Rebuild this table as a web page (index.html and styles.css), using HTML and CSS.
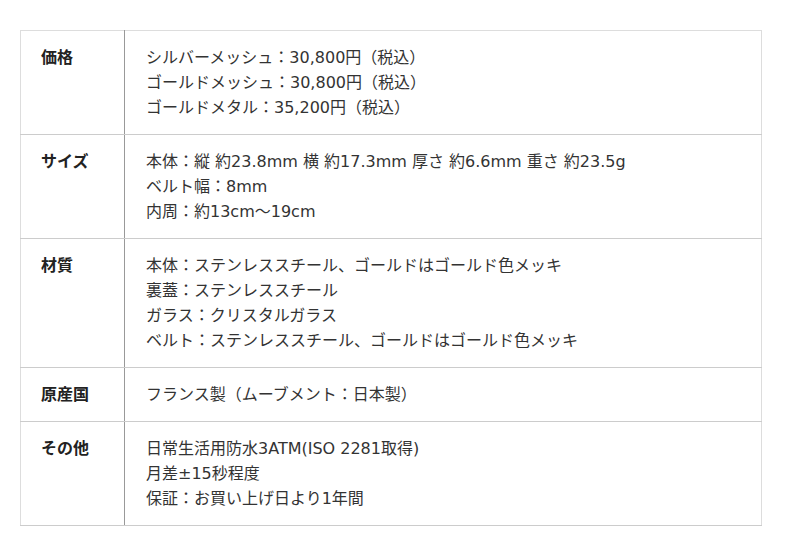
FILE: index.html
```html
<!DOCTYPE html>
<html lang="ja">
<head>
<meta charset="utf-8">
<link rel="stylesheet" href="styles.css">
</head>
<body>
<table class="spec">
  <tr>
    <th>価格</th>
    <td>シルバーメッシュ：30,800円（税込）<br>ゴールドメッシュ：30,800円（税込）<br>ゴールドメタル：35,200円（税込）</td>
  </tr>
  <tr>
    <th>サイズ</th>
    <td>本体：縦 約23.8mm 横 約17.3mm 厚さ 約6.6mm 重さ 約23.5g<br>ベルト幅：8mm<br>内周：約13cm〜19cm</td>
  </tr>
  <tr>
    <th>材質</th>
    <td>本体：ステンレススチール、ゴールドはゴールド色メッキ<br>裏蓋：ステンレススチール<br>ガラス：クリスタルガラス<br>ベルト：ステンレススチール、ゴールドはゴールド色メッキ</td>
  </tr>
  <tr>
    <th>原産国</th>
    <td>フランス製（ムーブメント：日本製）</td>
  </tr>
  <tr>
    <th>その他</th>
    <td>日常生活用防水3ATM(ISO 2281取得)<br>月差±15秒程度<br>保証：お買い上げ日より1年間</td>
  </tr>
</table>
</body>
</html>
```
FILE: styles.css
```css
html, body {
  margin: 0;
  padding: 0;
  background: #fff;
}
body {
  padding: 30px 20px;
  font-family: "DejaVu Sans", "Noto Sans CJK JP", sans-serif;
  font-size: 16px;
  color: #333;
}
.spec {
  width: 742px;
  border-collapse: collapse;
  border: 1px solid #ddd;
}
.spec th, .spec td {
  padding: 14px 20px 14px 21px;
  line-height: 25px;
  vertical-align: top;
  text-align: left;
  border-bottom: 1px solid #ccc;
}
.spec th {
  width: 63px;
  font-weight: bold;
  color: #222;
  border-right: 1px solid #999;
  padding-left: 20px;
}
.spec td {
  font-weight: normal;
}
```
